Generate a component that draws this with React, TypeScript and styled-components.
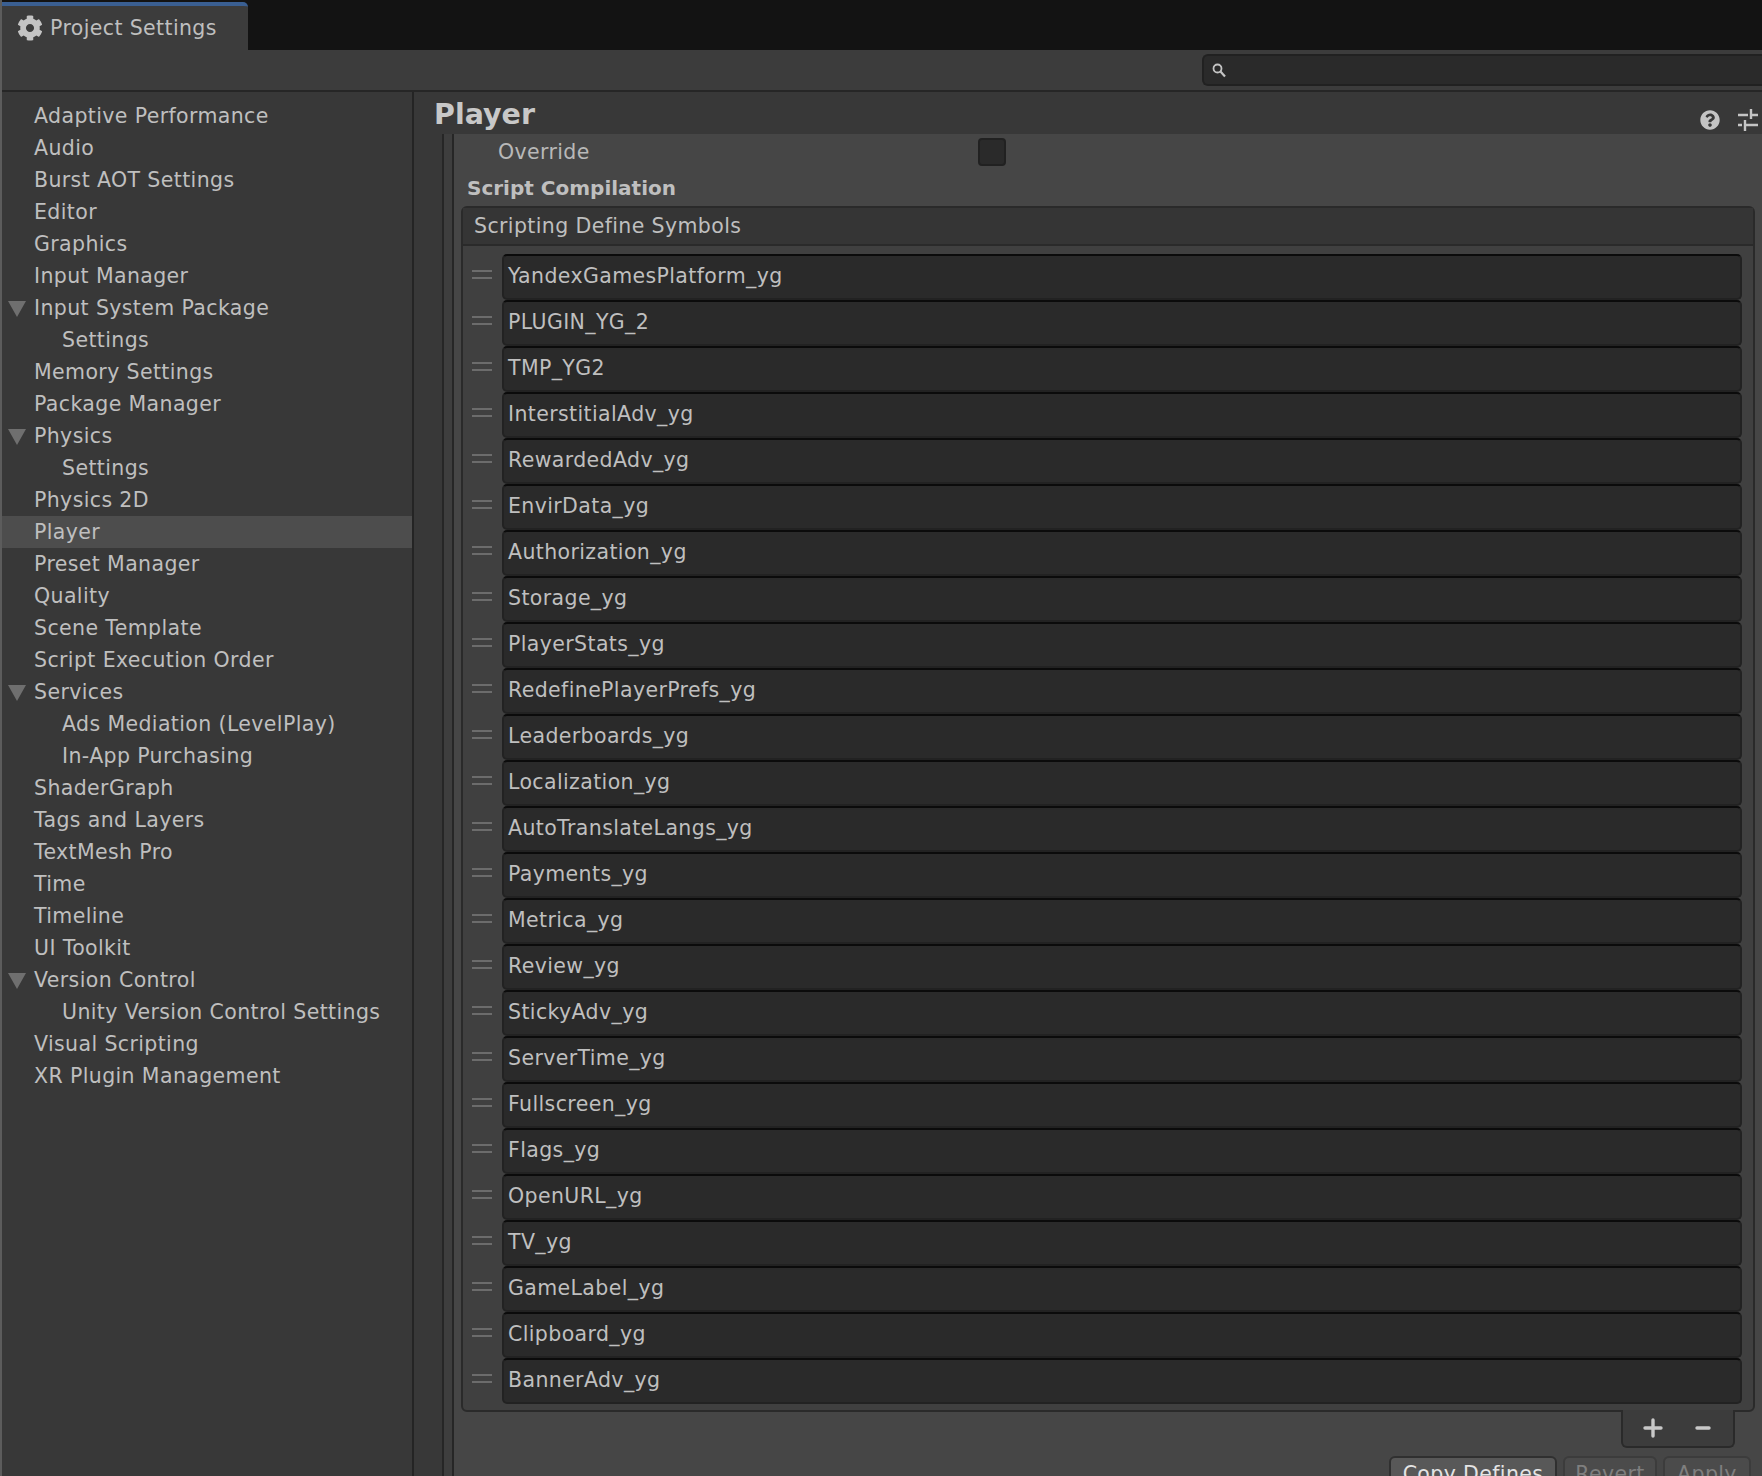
import React from "react";
import styled, { createGlobalStyle } from "styled-components";
import { FaCog, FaQuestionCircle } from "react-icons/fa";

const GlobalStyle = createGlobalStyle`
  html, body {
    margin: 0;
    padding: 0;
    background: #3c3c3c;
  }
`;

const Window = styled.div`
  width: 1762px;
  height: 1476px;
  overflow: hidden;
  display: flex;
  flex-direction: column;
  box-sizing: border-box;
  border-left: 2px solid #5c5c5c;
  background: #3c3c3c;
  color: #bfbfbf;
  font-family: "DejaVu Sans", sans-serif;
  font-size: 20.5px;
  letter-spacing: 0.38px;
`;

const TabBar = styled.div`
  height: 50px;
  flex: none;
  display: flex;
  align-items: flex-end;
  background: #131313;
  margin-left: -2px;
`;

const Tab = styled.div`
  width: 248px;
  height: 48px;
  box-sizing: border-box;
  display: flex;
  align-items: center;
  gap: 7px;
  padding-left: 17px;
  background: #3c3c3c;
  border-top: 4px solid #3a5f92;
  border-top-right-radius: 5px;
`;

const Toolbar = styled.div`
  height: 42px;
  flex: none;
  box-sizing: border-box;
  display: flex;
  justify-content: flex-end;
  padding-top: 4px;
  border-bottom: 2px solid #262626;
`;

const SearchField = styled.div`
  width: 560px;
  height: 32px;
  box-sizing: border-box;
  display: flex;
  align-items: center;
  padding-left: 8px;
  background: #2a2a2a;
  border: 2px solid #212121;
  border-right: none;
  border-radius: 6px 0 0 6px;
`;

const Body = styled.div`
  flex: 1;
  min-height: 0;
  display: flex;
`;

const Sidebar = styled.nav`
  width: 412px;
  flex: none;
  box-sizing: border-box;
  padding-top: 8px;
  background: #383838;
  border-right: 2px solid #242424;
`;

const TreeRow = styled.div<{ $depth?: number; $selected?: boolean }>`
  position: relative;
  height: 32px;
  display: flex;
  align-items: center;
  padding-left: ${(p) => (p.$depth ? 60 : 32)}px;
  background: ${(p) => (p.$selected ? "#4d4d4d" : "transparent")};
`;

const Foldout = styled.span`
  position: absolute;
  left: 6px;
  top: 9px;
  width: 18px;
  height: 16px;
  background: #6f6f6f;
  clip-path: polygon(0 0, 100% 0, 50% 100%);
`;

const Main = styled.main`
  flex: 1;
  min-width: 0;
  display: flex;
  flex-direction: column;
  background: #383838;
`;

const InspectorHeader = styled.header`
  height: 42px;
  flex: none;
  box-sizing: border-box;
  display: flex;
  align-items: center;
  justify-content: space-between;
  padding: 0 4px 0 20px;
`;

const Title = styled.h1`
  margin: 2px 0 0;
  font-size: 28.5px;
  font-weight: 700;
  letter-spacing: 0;
  color: #c8c8c8;
`;

const HeaderIcons = styled.div`
  display: flex;
  align-items: center;
  gap: 18px;
  padding-top: 14px;
`;

const Scroller = styled.div`
  flex: 1;
  min-height: 0;
  margin-left: 28px;
  display: flex;
  border-left: 2px solid #262626;
`;

const Gutter = styled.div`
  width: 8px;
  flex: none;
  background: #3e3e3e;
  border-right: 2px solid #262626;
`;

const Content = styled.div`
  flex: 1;
  min-width: 0;
  background: #464646;
  padding: 0 7px;
`;

const OverrideRow = styled.div`
  height: 34px;
  box-sizing: border-box;
  display: flex;
  align-items: center;
  padding: 2px 0 0 37px;
`;

const OverrideLabel = styled.span`
  width: 480px;
  color: #b8b8b8;
`;

const Checkbox = styled.span`
  width: 28px;
  height: 28px;
  box-sizing: border-box;
  background: #2a2a2a;
  border: 2px solid #212121;
  border-radius: 4px;
`;

const SectionTitle = styled.div`
  height: 38px;
  box-sizing: border-box;
  display: flex;
  align-items: center;
  padding: 2px 0 0 6px;
  font-size: 20px;
  font-weight: 700;
  letter-spacing: 0;
`;

const ListBox = styled.section`
  box-sizing: border-box;
  border: 2px solid #2a2a2a;
  border-radius: 6px;
  background: #404040;
`;

const ListHeader = styled.div`
  height: 38px;
  box-sizing: border-box;
  display: flex;
  align-items: center;
  padding-left: 11px;
  background: #353535;
  border-bottom: 2px solid #2a2a2a;
`;

const ListBody = styled.div`
  padding: 8px 11px 6px 9px;
`;

const ListItem = styled.div`
  height: 46px;
  display: flex;
  align-items: center;
  gap: 10px;
`;

const DragHandle = styled.span`
  width: 20px;
  height: 9px;
  flex: none;
  margin-top: -5px;
  box-sizing: border-box;
  border-top: 2px solid #6c6c6c;
  border-bottom: 2px solid #6c6c6c;
`;

const ItemField = styled.div`
  flex: 1;
  height: 46px;
  box-sizing: border-box;
  display: flex;
  align-items: center;
  padding: 0 0 2px 4px;
  background: #2a2a2a;
  border: 2px solid #222222;
  border-top-color: #0b0b0b;
  border-radius: 5px;
`;

const ListFooterRow = styled.div`
  display: flex;
  justify-content: flex-end;
  padding-right: 20px;
`;

const ListFooter = styled.div`
  width: 114px;
  height: 38px;
  box-sizing: border-box;
  margin-top: -2px;
  display: flex;
  align-items: center;
  gap: 32px;
  padding-left: 20px;
  background: #3c3c3c;
  border: 2px solid #2a2a2a;
  border-top: none;
  border-radius: 0 0 6px 6px;
`;

const ButtonRow = styled.div`
  display: flex;
  justify-content: flex-end;
  gap: 6px;
  padding: 8px 4px 0 0;
`;

const Button = styled.button<{ $width: number; $disabled?: boolean }>`
  width: ${(p) => p.$width}px;
  height: 36px;
  flex: none;
  box-sizing: border-box;
  padding: 0;
  font: inherit;
  letter-spacing: inherit;
  color: ${(p) => (p.$disabled ? "#7f7f7f" : "#e4e4e4")};
  background: ${(p) => (p.$disabled ? "#4b4b4b" : "#585858")};
  border: 2px solid ${(p) => (p.$disabled ? "#3c3c3c" : "#303030")};
  border-radius: 6px;
`;

const tree: { label: string; depth?: number; foldout?: boolean; selected?: boolean }[] = [
  { label: "Adaptive Performance" },
  { label: "Audio" },
  { label: "Burst AOT Settings" },
  { label: "Editor" },
  { label: "Graphics" },
  { label: "Input Manager" },
  { label: "Input System Package", foldout: true },
  { label: "Settings", depth: 1 },
  { label: "Memory Settings" },
  { label: "Package Manager" },
  { label: "Physics", foldout: true },
  { label: "Settings", depth: 1 },
  { label: "Physics 2D" },
  { label: "Player", selected: true },
  { label: "Preset Manager" },
  { label: "Quality" },
  { label: "Scene Template" },
  { label: "Script Execution Order" },
  { label: "Services", foldout: true },
  { label: "Ads Mediation (LevelPlay)", depth: 1 },
  { label: "In-App Purchasing", depth: 1 },
  { label: "ShaderGraph" },
  { label: "Tags and Layers" },
  { label: "TextMesh Pro" },
  { label: "Time" },
  { label: "Timeline" },
  { label: "UI Toolkit" },
  { label: "Version Control", foldout: true },
  { label: "Unity Version Control Settings", depth: 1 },
  { label: "Visual Scripting" },
  { label: "XR Plugin Management" },
];

const symbols = [
  "YandexGamesPlatform_yg",
  "PLUGIN_YG_2",
  "TMP_YG2",
  "InterstitialAdv_yg",
  "RewardedAdv_yg",
  "EnvirData_yg",
  "Authorization_yg",
  "Storage_yg",
  "PlayerStats_yg",
  "RedefinePlayerPrefs_yg",
  "Leaderboards_yg",
  "Localization_yg",
  "AutoTranslateLangs_yg",
  "Payments_yg",
  "Metrica_yg",
  "Review_yg",
  "StickyAdv_yg",
  "ServerTime_yg",
  "Fullscreen_yg",
  "Flags_yg",
  "OpenURL_yg",
  "TV_yg",
  "GameLabel_yg",
  "Clipboard_yg",
  "BannerAdv_yg",
];

const SearchIcon = () => (
  <svg width="14" height="15" viewBox="0 0 14 15" fill="none" stroke="#c4c4c4">
    <circle cx="5.5" cy="5.5" r="4" strokeWidth="1.8" />
    <path d="M8.5 8.5 L13 13.5" strokeWidth="2.2" />
  </svg>
);

const SlidersIcon = () => (
  <svg width="20" height="22" viewBox="0 0 20 22" fill="none" stroke="#c4c4c4" strokeWidth="2.4">
    <path d="M0 6 H10 M14 6 H20 M13 0 V10" />
    <path d="M0 16 H4 M8 16 H20 M7 11 V22" />
  </svg>
);

const PlusIcon = () => (
  <svg width="20" height="20" viewBox="0 0 20 20" stroke="#c8c8c8" strokeWidth="3.4" strokeLinecap="round">
    <path d="M2 10 H18 M10 2 V18" />
  </svg>
);

const MinusIcon = () => (
  <svg width="16" height="20" viewBox="0 0 16 20" stroke="#c8c8c8" strokeWidth="3.4" strokeLinecap="round">
    <path d="M2 10 H14" />
  </svg>
);

const App = () => (
  <Window>
    <GlobalStyle />
    <TabBar>
      <Tab>
        <FaCog size={26} color="#c4c4c4" />
        <span>Project Settings</span>
      </Tab>
    </TabBar>
    <Toolbar>
      <SearchField>
        <SearchIcon />
      </SearchField>
    </Toolbar>
    <Body>
      <Sidebar>
        {tree.map((row, i) => (
          <TreeRow key={i} $depth={row.depth} $selected={row.selected}>
            {row.foldout && <Foldout />}
            {row.label}
          </TreeRow>
        ))}
      </Sidebar>
      <Main>
        <InspectorHeader>
          <Title>Player</Title>
          <HeaderIcons>
            <FaQuestionCircle size={20} color="#c4c4c4" />
            <SlidersIcon />
          </HeaderIcons>
        </InspectorHeader>
        <Scroller>
          <Gutter />
          <Content>
            <OverrideRow>
              <OverrideLabel>Override</OverrideLabel>
              <Checkbox />
            </OverrideRow>
            <SectionTitle>Script Compilation</SectionTitle>
            <ListBox>
              <ListHeader>Scripting Define Symbols</ListHeader>
              <ListBody>
                {symbols.map((name) => (
                  <ListItem key={name}>
                    <DragHandle />
                    <ItemField>{name}</ItemField>
                  </ListItem>
                ))}
              </ListBody>
            </ListBox>
            <ListFooterRow>
              <ListFooter>
                <PlusIcon />
                <MinusIcon />
              </ListFooter>
            </ListFooterRow>
            <ButtonRow>
              <Button $width={168}>Copy Defines</Button>
              <Button $width={94} $disabled>
                Revert
              </Button>
              <Button $width={88} $disabled>
                Apply
              </Button>
            </ButtonRow>
          </Content>
        </Scroller>
      </Main>
    </Body>
  </Window>
);

export default App;
